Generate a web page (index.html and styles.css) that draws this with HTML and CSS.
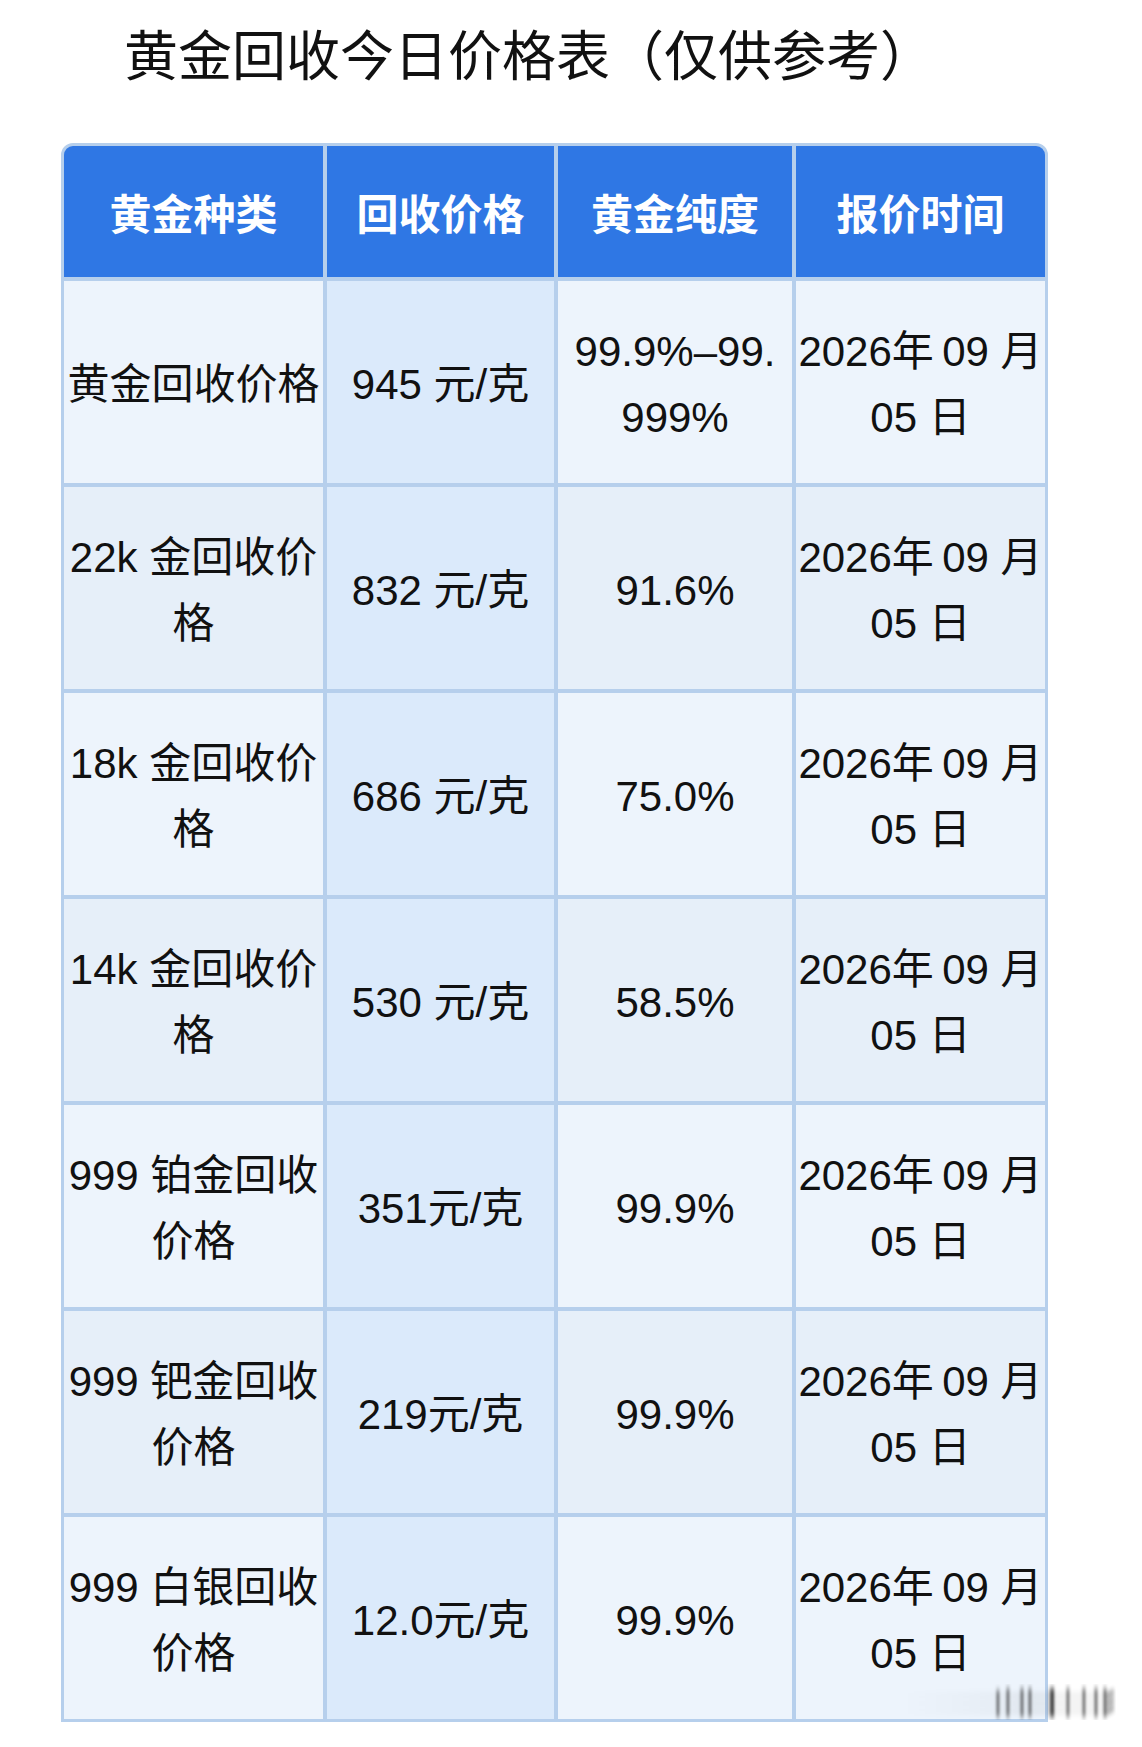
FILE: index.html
```html
<!DOCTYPE html>
<html lang="zh-CN">
<head>
<meta charset="utf-8">
<title>黄金回收今日价格表</title>
<link rel="stylesheet" href="styles.css">
</head>
<body>
<div class="page">
  <h1 class="title">黄金回收今日价格表（仅供参考）</h1>
  <div class="table-wrap">
    <table class="price-table">
      <colgroup>
        <col class="c1"><col class="c2"><col class="c3"><col class="c4">
      </colgroup>
      <thead>
        <tr><th>黄金种类</th><th>回收价格</th><th>黄金纯度</th><th>报价时间</th></tr>
      </thead>
      <tbody>
        <tr><td>黄金回收价格</td><td class="price">945 元/克</td><td>99.9%–99.<br>999%</td><td>2026年&thinsp;09 月<br>05 日</td></tr>
        <tr><td>22k 金回收价<br>格</td><td class="price">832 元/克</td><td>91.6%</td><td>2026年&thinsp;09 月<br>05 日</td></tr>
        <tr><td>18k 金回收价<br>格</td><td class="price">686 元/克</td><td>75.0%</td><td>2026年&thinsp;09 月<br>05 日</td></tr>
        <tr><td>14k 金回收价<br>格</td><td class="price">530 元/克</td><td>58.5%</td><td>2026年&thinsp;09 月<br>05 日</td></tr>
        <tr><td>999 铂金回收<br>价格</td><td class="price">351元/克</td><td>99.9%</td><td>2026年&thinsp;09 月<br>05 日</td></tr>
        <tr><td>999 钯金回收<br>价格</td><td class="price">219元/克</td><td>99.9%</td><td>2026年&thinsp;09 月<br>05 日</td></tr>
        <tr><td>999 白银回收<br>价格</td><td class="price">12.0元/克</td><td>99.9%</td><td>2026年&thinsp;09 月<br>05 日</td></tr>
      </tbody>
    </table>
    <svg class="watermark" width="220" height="36" viewBox="0 0 220 36" aria-hidden="true">
      <defs>
        <filter id="blur" x="-20%" y="-50%" width="140%" height="200%"><feGaussianBlur stdDeviation="1.6 3"/></filter>
        <linearGradient id="fade" x1="0" x2="1" y1="0" y2="0">
          <stop offset="0" stop-color="#000" stop-opacity="0"/>
          <stop offset="0.45" stop-color="#000" stop-opacity="0.45"/>
          <stop offset="0.6" stop-color="#000" stop-opacity="0.9"/>
          <stop offset="1" stop-color="#000" stop-opacity="0.7"/>
        </linearGradient>
      </defs>
      <g filter="url(#blur)" fill="url(#fade)">
        <rect x="0" y="10" width="210" height="3" opacity="0.15"/>
        <rect x="0" y="18" width="210" height="3" opacity="0.15"/>
        <rect x="0" y="26" width="210" height="3" opacity="0.15"/>
        <rect x="96" y="6" width="3" height="27"/>
        <rect x="106" y="4" width="3" height="29"/>
        <rect x="120" y="4" width="3" height="29"/>
        <rect x="128" y="4" width="3" height="29"/>
        <rect x="148" y="4" width="6" height="29"/>
        <rect x="166" y="4" width="3" height="29"/>
        <rect x="182" y="4" width="3" height="29"/>
        <rect x="194" y="4" width="3" height="29"/>
        <rect x="203" y="4" width="3" height="29"/>
      </g>
      <g stroke="#000" stroke-width="2.5" fill="none" filter="url(#blur)" opacity="0.8">
        <path d="M206 12 L214 8"/><path d="M206 20 L214 16"/><path d="M206 28 L214 24"/>
      </g>
    </svg>
  </div>
</div>
</body>
</html>
```

FILE: styles.css
```css
html, body {
  margin: 0;
  padding: 0;
  background: #ffffff;
}

body {
  font-family: "Liberation Sans", "Noto Sans CJK SC", sans-serif;
  color: #111111;
}

.page {
  width: 1142px;
  padding: 20px 0 0 61px;
  box-sizing: border-box;
}

.title {
  margin: 0 0 57px 63px;
  font-family: "Noto Sans CJK SC", sans-serif;
  font-weight: 400;
  font-size: 54px;
  line-height: 66px;
  color: #111111;
  letter-spacing: 0;
}

.table-wrap {
  position: relative;
  width: 987px;
}

.price-table {
  width: 987px;
  border-collapse: separate;
  border-spacing: 0;
  table-layout: fixed;
  border: 3px solid #b6cfec;
  border-radius: 12px 12px 0 0;
  overflow: hidden;
  background: #b6cfec;
}

.c1 { width: 263px; }
.c2 { width: 231px; }
.c3 { width: 238px; }
.c4 { width: 249px; }

.price-table th,
.price-table td {
  padding: 0;
  text-align: center;
  vertical-align: middle;
  border-right: 4px solid #b6cfec;
  border-bottom: 4px solid #b6cfec;
}

.price-table th:last-child,
.price-table td:last-child {
  border-right: none;
}

.price-table tbody tr:last-child td {
  border-bottom: none;
}

.price-table th {
  height: 131px;
  background: #2f77e4;
  color: #ffffff;
  font-family: "Noto Sans CJK SC", sans-serif;
  font-weight: 700;
  font-size: 42px;
  line-height: 50px;
}

.price-table td {
  height: 196px;
  padding-top: 6px;
  font-size: 42px;
  line-height: 66px;
  background: #edf4fc;
  color: #111111;
  white-space: nowrap;
}

.price-table tbody tr:nth-child(even) td {
  background: #e6eff9;
}

.price-table tbody tr td.price {
  background: #dbeafb;
}

.watermark {
  position: absolute;
  right: -72px;
  bottom: 2px;
}
```
